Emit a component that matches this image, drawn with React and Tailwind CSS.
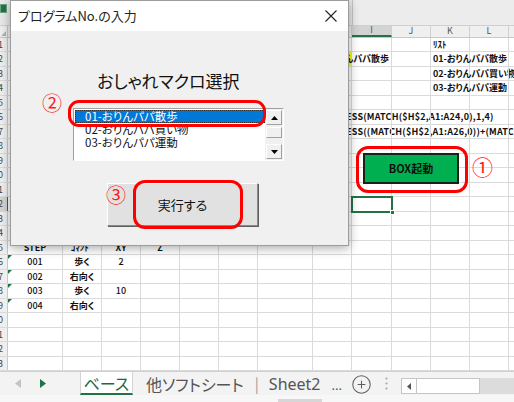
import React from 'react';
import { CirclePlus } from 'lucide-react';

const COLS = [
  { k: 'A', w: 'w-[55px]' },
  { k: 'B', w: 'w-[39px]' },
  { k: 'C', w: 'w-[39px]' },
  { k: 'D', w: 'w-[39px]' },
  { k: 'E', w: 'w-[39px]' },
  { k: 'F', w: 'w-[39px]' },
  { k: 'G', w: 'w-[55px]' },
  { k: 'H', w: 'w-[39px]' },
  { k: 'I', w: 'w-[40px]' },
  { k: 'J', w: 'w-[39px]' },
  { k: 'K', w: 'w-[39px]' },
  { k: 'L', w: 'w-[39px]' },
  { k: 'M', w: 'w-[40px]' },
];

const DATA = {
  1: { K: { t: 'ﾘｽﾄ', b: true } },
  2: {
    H: { t: '01-おりんパパ散歩', b: true, bg: 'bg-[#ffff00]' },
    K: { t: '01-おりんパパ散歩', b: true },
  },
  3: { K: { t: '02-おりんパパ買い物', b: true } },
  4: { K: { t: '03-おりんパパ運動', b: true } },
  6: { H: { t: '=ADDRESS(MATCH($H$2,A1:A24,0),1,4)', b: true, tr: true } },
  7: { H: { t: '=ADDRESS((MATCH($H$2,A1:A26,0))+(MATCH(1,--(A1:A26=""),0)),1,4)', b: true, tr: true } },
  15: {
    A: { t: 'STEP', c: true, b: true },
    B: { t: 'ｺﾏﾝﾄﾞ', c: true, b: true },
    C: { t: 'XY', c: true, b: true },
    D: { t: 'Z', c: true, b: true },
  },
  16: { A: { t: '001', c: true, tri: true }, B: { t: '歩く', c: true, b: true }, C: { t: '2', c: true } },
  17: { A: { t: '002', c: true, tri: true }, B: { t: '右向く', c: true, b: true } },
  18: { A: { t: '003', c: true, tri: true }, B: { t: '歩く', c: true, b: true }, C: { t: '10', c: true } },
  19: { A: { t: '004', c: true, tri: true }, B: { t: '右向く', c: true, b: true } },
};

const ROWS = Array.from({ length: 23 }, (_, i) => i + 1);

const Cell = ({ col, cell }) => {
  return (
    <div
      className={`${col.w} h-full shrink-0 flex items-center border-r border-[#dadada] whitespace-nowrap text-[9px] text-[#111] ${
        cell && cell.c ? 'justify-center' : 'pl-[2px]'
      } ${cell && cell.b ? 'font-bold' : 'font-medium'} ${cell && cell.bg ? cell.bg : ''} ${
        cell && cell.tri ? 'relative' : ''
      } ${cell && cell.tr ? 'tracking-[0.2px]' : ''}`}
    >
      {cell && cell.tri && (
        <span className="absolute left-0 top-0 w-0 h-0 border-t-[4px] border-t-[#217346] border-r-[4px] border-r-transparent" />
      )}
      {cell ? cell.t : null}
    </div>
  );
};

const Sheet = () => {
  return (
    <div className="flex flex-col w-[514px] h-[402px] bg-white">
      {/* ribbon / formula area */}
      <div className="h-[26px] flex bg-[#e9e9e9] border-b border-[#cfcfcf]">
        <div className="w-[8px] pt-[4px]">
          <div className="w-[7px] h-[9px] bg-[#217346] border border-[#6aa583]" />
        </div>
        <div className="w-[344px]" />
        <div className="flex-1 border-l border-[#c6c6c6] bg-[#ececec]" />
      </div>

      {/* column headers */}
      <div className="h-[12px] flex bg-[#efefef] border-b border-[#c8c8c8]">
        <div className="w-[8px] shrink-0 border-r border-[#c8c8c8] relative">
          <span className="absolute right-[1px] bottom-[1px] w-0 h-0 border-b-[5px] border-b-[#b5b5b5] border-l-[5px] border-l-transparent" />
        </div>
        {COLS.map((c) => (
          <div
            key={c.k}
            className={`${c.w} shrink-0 flex items-center justify-center text-[9px] text-[#555] border-r border-[#d0d0d0] ${
              c.k === 'I' ? 'bg-[#d3d3d3] border-b-2 border-b-[#217346]' : ''
            }`}
          >
            {c.k}
          </div>
        ))}
      </div>

      {/* rows */}
      {ROWS.map((r) => (
        <div key={r} className="h-[14.5px] flex border-b border-[#dadada]">
          <div
            className={`w-[8px] shrink-0 flex items-center justify-end pr-[4px] overflow-hidden text-[9px] text-[#444] border-r ${
              r === 12 ? 'bg-[#d3d3d3] border-[#217346]' : 'bg-[#efefef] border-[#c8c8c8]'
            }`}
          >
            {r}
          </div>
          {COLS.map((c) => (
            <Cell key={c.k} col={c} cell={DATA[r] && DATA[r][c.k]} />
          ))}
        </div>
      ))}

      {/* sheet tabs */}
      <div className="flex-1 flex flex-col bg-[#f3f3f3] border-t border-[#cfcfcf]">
        <div className="h-[23px] flex items-stretch">
          <div className="w-[80px] shrink-0 flex items-center pl-[15px] gap-[19px]">
            <svg width="6" height="9" viewBox="0 0 6 9">
              <polygon points="6,0 6,9 0,4.5" fill="#c4c4c4" />
            </svg>
            <svg width="6" height="9" viewBox="0 0 6 9">
              <polygon points="0,0 0,9 6,4.5" fill="#217346" />
            </svg>
          </div>
          <div className="w-[53px] shrink-0 bg-white border-x border-[#d4d4d4] border-b-2 border-b-[#217346] flex items-center justify-center text-[16px] text-[#1f6b40] leading-none">
            ベース
          </div>
          <div className="ml-[13px] flex items-center text-[16px] text-[#555] leading-none">他ソフトシート</div>
          <div className="ml-[11px] flex items-center text-[15px] text-[#9a9a9a] leading-none">|</div>
          <div className="ml-[10px] flex items-center text-[16px] text-[#555] leading-none font-['Noto_Sans',sans-serif]">
            Sheet2
          </div>
          <div className="ml-[11px] flex items-center text-[13px] text-[#217346] leading-none pt-[4px] font-['Noto_Sans',sans-serif]">
            ...
          </div>
          <div className="ml-[9px] flex items-center pt-[2px]">
            <CirclePlus size={21} strokeWidth={1.2} color="#5f5f5f" />
          </div>
          <div className="ml-[13px] flex items-center">
            <svg width="3" height="13" viewBox="0 0 3 13">
              <circle cx="1.5" cy="1.5" r="1.1" fill="#a8a8a8" />
              <circle cx="1.5" cy="6.5" r="1.1" fill="#a8a8a8" />
              <circle cx="1.5" cy="11.5" r="1.1" fill="#a8a8a8" />
            </svg>
          </div>
          <div className="ml-[13px] mt-[6px] h-[16px] w-[79px] flex bg-white border border-[#c6c6c6]">
            <div className="w-[15px] flex items-center justify-center border-r border-[#c6c6c6]">
              <svg width="4" height="7" viewBox="0 0 4 7">
                <polygon points="4,0 4,7 0,3.5" fill="#555" />
              </svg>
            </div>
          </div>
          <div className="flex-1 mt-[6px] h-[16px] bg-[#dcdcdc]" />
        </div>
        <div className="flex-1 bg-[#f7f7f7] flex">
          <div className="ml-[278px] mt-[4px] w-[44px] h-[3px] bg-[#d6d6d6]" />
        </div>
      </div>
    </div>
  );
};

const Triangle = ({ up }) => (
  <svg width="7" height="4" viewBox="0 0 7 4">
    <polygon points={up ? '0,4 7,4 3.5,0' : '0,0 7,0 3.5,4'} fill="#000" />
  </svg>
);

const Dialog = () => {
  return (
    <div className="absolute left-[10px] top-0 w-[339px] h-[246px] bg-[#f0f0f0] border border-[#9c9c9c] shadow-[0_2px_10px_rgba(0,0,0,0.35)] flex flex-col">
      <div className="h-[30px] shrink-0 bg-white flex items-center justify-between pl-[7px] pr-[11px]">
        <span className="text-[13px] text-[#222]">プログラムNo.の入力</span>
        <svg width="12" height="12" viewBox="0 0 12 12">
          <path d="M0.5 0.5 L11.5 11.5 M11.5 0.5 L0.5 11.5" stroke="#222" strokeWidth="1.1" />
        </svg>
      </div>

      <div className="mt-[37px] pl-[86px] h-[24px] flex items-center text-[17px] text-[#111] leading-none">
        おしゃれマクロ選択
      </div>

      {/* listbox */}
      <div className="mt-[16px] ml-[62px] w-[211px] h-[53px] flex bg-white border-t border-l border-[#a0a0a0] border-b border-r border-b-white border-r-white">
        <div className="flex-1 pt-[1px] pl-[1px] text-[11.5px] leading-[13px] text-[#111]">
          <div className="h-[13px] pl-[10px] bg-[#0078d7] text-white outline-1 outline-dotted outline-[#333] -outline-offset-1">
            01-おりんパパ散歩
          </div>
          <div className="h-[13px] pl-[10px]">02-おりんパパ買い物</div>
          <div className="h-[13px] pl-[10px]">03-おりんパパ運動</div>
        </div>
        <div className="w-[18px] shrink-0 flex flex-col bg-[#f0f0f0] p-[1px]">
          <div className="h-[15px] flex items-center justify-center bg-[#f0f0f0] border border-[#a0a0a0] border-t-white border-l-white">
            <Triangle up />
          </div>
          <div className="mt-[2px] h-[11px] bg-[#f0f0f0] border border-[#a0a0a0] border-t-white border-l-white" />
          <div className="flex-1" />
          <div className="h-[15px] flex items-center justify-center bg-[#f0f0f0] border border-[#a0a0a0] border-t-white border-l-white">
            <Triangle />
          </div>
        </div>
      </div>

      {/* button */}
      <div className="mt-[22px] ml-[96px] w-[151px] h-[43px] flex items-center justify-center bg-[#e1e1e1] border border-t-white border-l-white border-b-[#8a8a8a] border-r-[#8a8a8a] shadow-[1px_1px_0_#5e5e5e] text-[13px] text-[#111]">
        実行する
      </div>

      {/* annotations */}
      <div className="absolute left-[57px] top-[99px] w-[198px] h-[27px] border-[3px] border-[#ff0000] rounded-[11px]" />
      <div className="absolute left-[31px] top-[92px] text-[20px] leading-none text-[#ff1a1a]">②</div>
      <div className="absolute left-[122px] top-[179px] w-[110px] h-[49px] border-[3px] border-[#ff0000] rounded-[12px]" />
      <div className="absolute left-[95px] top-[184px] text-[20px] leading-none text-[#ff1a1a]">③</div>
    </div>
  );
};

export default function App() {
  return (
    <div className="relative w-[514px] h-[402px] overflow-hidden font-['Noto_Sans_CJK_JP',sans-serif] [font-feature-settings:'palt']">
      <Sheet />

      {/* shape on sheet */}
      <div className="absolute left-[363px] top-[153px] w-[96px] h-[31px] bg-[#00b050] border-2 border-[#1e1e1e] flex items-center justify-center text-[11px] font-bold text-[#111]">
        BOX起動
      </div>
      <div className="absolute left-[356px] top-[146px] w-[112px] h-[47px] border-[3px] border-[#ff0000] rounded-[12px]" />
      <div className="absolute left-[472px] top-[156px] text-[21px] leading-none text-[#ff1a1a]">①</div>

      {/* selected cell I12 */}
      <div className="absolute left-[351px] top-[196px] w-[42px] h-[17px] border-2 border-[#217346]">
        <span className="absolute -right-[4px] -bottom-[4px] w-[5px] h-[5px] bg-[#217346] border border-white" />
      </div>

      <Dialog />
    </div>
  );
}
